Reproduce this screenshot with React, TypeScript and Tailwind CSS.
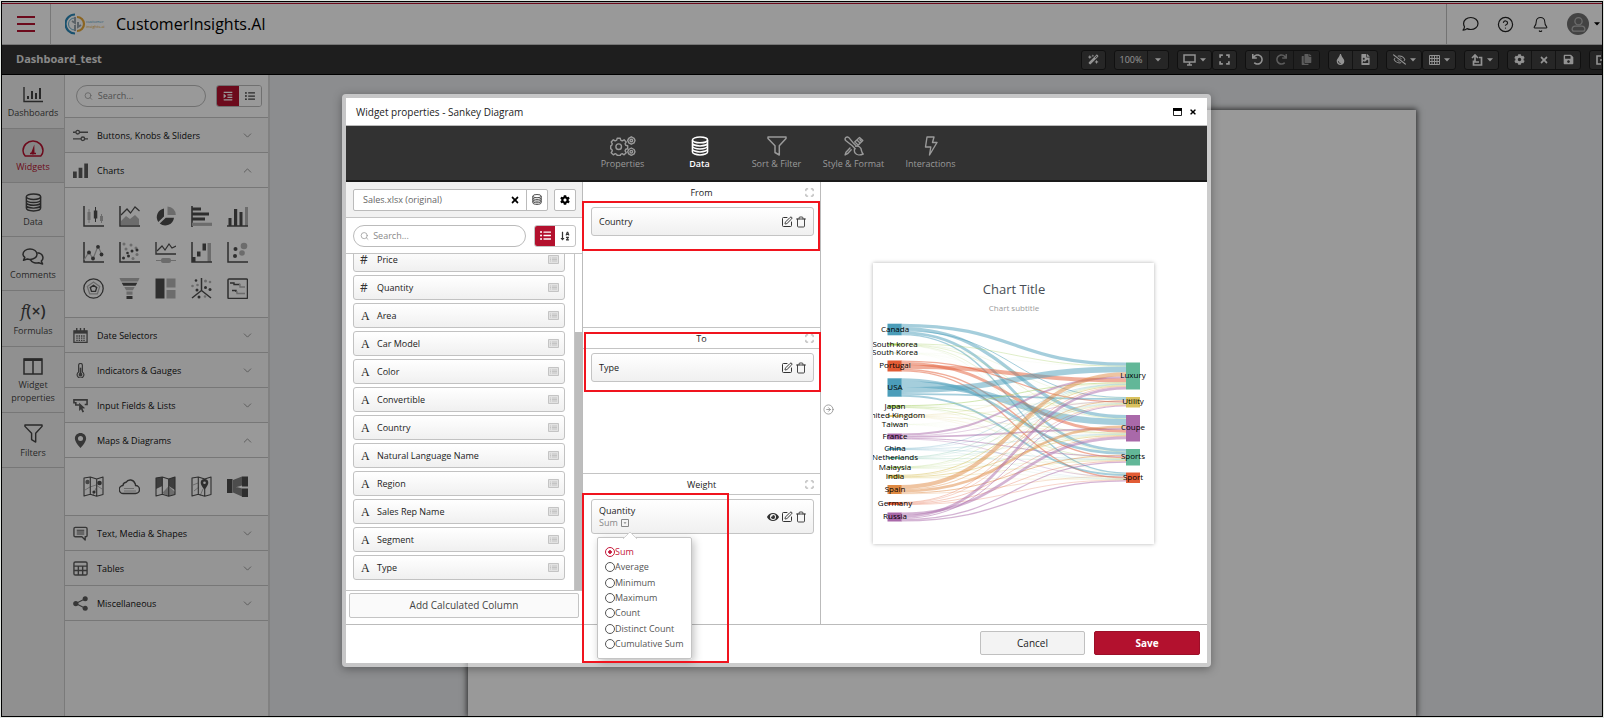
import type { ReactNode } from 'react';
import {
  FaCog,
  FaCopy,
  FaEye,
  FaFileImage,
  FaListUl,
  FaRegEyeSlash,
  FaSave,
  FaSortAlphaDown,
  FaTimes,
  FaTint,
  FaUndo,
  FaRedo,
  FaIndent,
} from 'react-icons/fa';
import { FaWandMagicSparkles } from 'react-icons/fa6';
import { Bell, ChevronDown, ChevronUp, CircleArrowRight, CircleHelp, Search, SquarePen, Trash } from 'lucide-react';

type IconProps = { className?: string };

/* ---------- line icons ---------- */

function DatabaseIcon({ className }: IconProps) {
  return (
    <svg viewBox="0 0 20 22" className={className} fill="none" stroke="currentColor" strokeWidth="1.7">
      <ellipse cx="10" cy="4.2" rx="8.4" ry="3.2" />
      <path d="M1.6 4.2v13.4c0 1.8 3.8 3.3 8.4 3.3s8.4-1.500 8.400-3.300V4.200M1.600 7.700c0 1.800 3.800 3.200 8.400 3.200s8.400-1.400 8.400-3.200M1.600 11c0 1.800 3.800 3.300 8.400 3.300s8.400-1.500 8.400-3.300M1.600 14.300c0 1.800 3.800 3.300 8.400 3.300s8.400-1.500 8.400-3.300" />
    </svg>
  );
}

function FunnelIcon({ className }: IconProps) {
  return (
    <svg viewBox="0 0 20 20" className={className} fill="none" stroke="currentColor" strokeWidth="1.500" strokeLinejoin="round">
      <path d="M1 1h18v1.500L12.300 9.800V19L8 16.500V9.800L1 2.500z" />
    </svg>
  );
}

function GearsIcon({ className }: IconProps) {
  return (
    <svg viewBox="0 0 26 20" className={className} fill="none" stroke="currentColor" strokeWidth="1.400" strokeLinejoin="round">
      <path d="M7.200 2.200h3l.5 2 1.500.7 1.900-1.100 2.100 2.100-1.100 1.900.6 1.500 2 .5v3l-2 .5-.6 1.500 1.100 1.900-2.100 2.100-1.900-1.100-1.500.6-.5 1.200h-3l-.5-1.200-1.500-.6-1.900 1.100-2.100-2.100 1.100-1.900-.6-1.500-1-.5v-3l1-.5.6-1.500-1.100-1.900 2.100-2.100 1.900 1.100 1.500-.7z" />
      <circle cx="8.700" cy="10.700" r="2.800" />
      <path d="M21.300.8l2.800 1.600.9 2-.9 2.400-2.800 1.400-2.600-1.400-1-2.400 1-2zM21.300 12l2.800 1.500.9 2.200-.9 2.200-2.800 1.400-2.600-1.400-1-2.200 1-2.200z" />
      <circle cx="21.300" cy="4.500" r="1.300" />
      <circle cx="21.300" cy="15.700" r="1.300" />
    </svg>
  );
}

function BrushRulerIcon({ className }: IconProps) {
  return (
    <svg viewBox="0 0 20 20" className={className} fill="none" stroke="currentColor" strokeWidth="1.400" strokeLinejoin="round" strokeLinecap="round">
      <path d="M8 9.500L2 4.800C.8 3.800.8 2.400 1.800 1.500s2.500-.6 3.300.4l4.700 5.700M11.800 10.300c2.200-.4 4.200.4 5 2 .8 1.700.6 4.200 2.400 5.700-3 1.400-6.600 1.200-8-.8-.9-1.300-1-3.200-.5-4.900M8 9.500l3.200 3.200M9.800 7.600l2.800 2.700" />
      <path d="M7.200 13.800l-3.700 3.900-2.400 1.200.9-2.700 4-4.200M10.700 6l4.800-4.600 3.300 3.200-5 5M15.300 6.200l-1.600-1.500M13.300 8.200l-1.600-1.500M16.800 4.700l-1-1" />
    </svg>
  );
}

function BoltIcon({ className }: IconProps) {
  return (
    <svg viewBox="0 0 14 20" className={className} fill="none" stroke="currentColor" strokeWidth="1.400" strokeLinejoin="round">
      <path d="M3 1h7L8.500 6.500H13L5.500 19l1.300-8H1.500z" />
    </svg>
  );
}

function BarsRailIcon({ className }: IconProps) {
  return (
    <svg viewBox="0 0 20 16" className={className} fill="none" stroke="currentColor">
      <path d="M1 0v14.500h19" strokeWidth="1.400" />
      <path d="M5 12V9M9 12V4M13 12V6M17 12V1" strokeWidth="2" />
    </svg>
  );
}

function GaugeIcon({ className }: IconProps) {
  return (
    <svg viewBox="0 0 22 17" className={className} fill="none" stroke="currentColor" strokeWidth="1.500" strokeLinejoin="round">
      <path d="M3.200 16C1.800 14.500 1 12.800 1 10.800 1 5.300 5.500 1 11 1s10 4.300 10 9.800c0 2-.8 3.700-2.200 5.200z" />
      <path d="M12.300 4.500l.2 7.700a1.700 1.700 0 1 1-2.800-.6z" fill="currentColor" stroke="none" />
      <path d="M8 13.500h6" />
    </svg>
  );
}

function CommentsIcon({ className }: IconProps) {
  return (
    <svg viewBox="0 0 22 17" className={className} fill="none" stroke="currentColor" strokeWidth="1.500" strokeLinejoin="round">
      <path d="M8 1c4 0 7 2.300 7 5.200s-3 5.200-7 5.200c-1 0-1.900-.1-2.700-.4L1.500 12.200l1.300-2.800C1.700 8.500 1 7.400 1 6.200 1 3.300 4 1 8 1z" />
      <path d="M15.300 4.800c3.300.3 5.700 2.400 5.700 4.900 0 1.300-.7 2.500-1.700 3.300l1.300 3-3.900-1.300c-3.400.8-7-.4-8.300-3" />
    </svg>
  );
}

function ColumnsIcon({ className }: IconProps) {
  return (
    <svg viewBox="0 0 20 17" className={className} fill="none" stroke="currentColor">
      <path d="M1 1h18v15H1zM10 2v14" strokeWidth="1.500" />
      <path d="M1 1.800h18" strokeWidth="2.400" />
    </svg>
  );
}

function CornersIcon({ className, heavy }: IconProps & { heavy?: boolean }) {
  return (
    <svg viewBox="0 0 10 10" className={className} fill="none" stroke="currentColor" strokeWidth={heavy ? 1.6 : 1.1}>
      <path d="M1 3.500V1h2.500M6.500 1H9v2.500M9 6.500V9H6.500M3.500 9H1V6.500" />
    </svg>
  );
}

function MonitorIcon({ className }: IconProps) {
  return (
    <svg viewBox="0 0 13 12" className={className} fill="none" stroke="currentColor" strokeWidth="1.500">
      <path d="M1 1h11v7H1zM6.500 8v3M4 11h5" />
    </svg>
  );
}

function SpeechIcon({ className }: IconProps) {
  return (
    <svg viewBox="0 0 17 16" className={className} fill="none" stroke="currentColor" strokeWidth="1.200" strokeLinejoin="round">
      <path d="M8.800 1.500c4.100 0 7.200 2.600 7.200 6s-3.100 6-7.200 6c-1.400 0-2.700-.3-3.800-.9-.9.900-2.400 1.500-4 1.500.9-1 1.500-2.300 1.500-3.300-.6-1-.9-2.100-.9-3.300 0-3.400 3.100-6 7.200-6z" />
    </svg>
  );
}

function PersonIcon({ className }: IconProps) {
  return (
    <svg viewBox="0 0 16 16" className={className} fill="none" stroke="currentColor" strokeWidth="1.200">
      <circle cx="8" cy="5" r="3.400" />
      <path d="M5 9.500h6c1.700 0 3 1.300 3 3 0 1.200-.6 1.800-1.800 1.800H3.800C2.600 14.300 2 13.700 2 12.500c0-1.700 1.300-3 3-3z" />
    </svg>
  );
}

/* ---------- widget section icons, 16 x 16 ---------- */

const sectionIcons: Record<string, ReactNode> = {
  sliders: (
    <g fill="none" stroke="currentColor" strokeWidth="1.400">
      <path d="M0 4.500h3M7 4.500h9M0 11.500h8.500M12.500 11.500H16" />
      <circle cx="5" cy="4.500" r="1.900" />
      <circle cx="10.500" cy="11.500" r="1.900" />
    </g>
  ),
  bars: <path fill="currentColor" d="M0 9h4v7H0zM6 5h4v11H6zM12 .5h4V16h-4z" />,
  calendar: (
    <g fill="none" stroke="currentColor">
      <path d="M1 3h14v12.300H1z" strokeWidth="1.400" />
      <path d="M1 4.500h14" strokeWidth="3" />
      <path d="M4 0v4M8 0v4M12 0v4" strokeWidth="1.500" />
      <path d="M3.500 8.500h9M3.500 10.800h9M3.500 13.100h9" strokeWidth="1.400" strokeDasharray="1.500 1" />
    </g>
  ),
  thermometer: (
    <g fill="none" stroke="currentColor">
      <path d="M6 2.500a2 2 0 0 1 4 0v7a3.600 3.600 0 1 1-4 0z" strokeWidth="1.300" />
      <path d="M8 5v7" strokeWidth="1.800" />
      <circle cx="8" cy="12.500" r="2" fill="currentColor" stroke="none" />
    </g>
  ),
  input: (
    <g>
      <path d="M6.500 7.500H3V5H1V2h14v5h-2.500" fill="none" stroke="currentColor" strokeWidth="1.700" />
      <path d="M6.500 5l6.500 6-2.900.2 1.700 3.400-1.700.8-1.500-3.500-2.100 1.900z" fill="currentColor" />
    </g>
  ),
  pin: <path fill="currentColor" fillRule="evenodd" d="M8 0c3.400 0 6 2.600 6 5.900C14 10 8 16 8 16S2 10 2 5.900C2 2.600 4.600 0 8 0zm0 3.200a2.700 2.700 0 1 0 0 5.400 2.700 2.700 0 0 0 0-5.400z" />,
  text: (
    <g fill="none" stroke="currentColor" strokeWidth="1.500" strokeLinejoin="round">
      <path d="M2.500 1.500h11c.8 0 1.500.7 1.500 1.500v7c0 .8-.7 1.500-1.500 1.500H13V15l-3.500-3.500h-7C1.700 11.500 1 10.800 1 10V3c0-.8.7-1.500 1.500-1.500z" />
      <path d="M4 4.500h8M4 6.500h8M4 8.500h8" strokeWidth="1.100" />
    </g>
  ),
  table: (
    <g fill="none" stroke="currentColor" strokeWidth="1.500">
      <rect x="1" y="1" width="14" height="14" rx="1.500" />
      <path d="M1 5.500h14M1 10.200h14M5.700 5.500V15M10.300 5.500V15" />
    </g>
  ),
  share: (
    <g fill="currentColor">
      <circle cx="3" cy="8" r="2.800" />
      <circle cx="13" cy="3" r="2.700" />
      <circle cx="13" cy="13" r="2.700" />
      <path d="M3 8l10-5M3 8l10 5" stroke="currentColor" strokeWidth="1.200" />
    </g>
  ),
};

/* ---------- widget tiles, 21 x 21 ---------- */

const DARK = '#4e4e4e';
const LIGHT = '#b4b4b4';

const Axis = () => <path d="M1 0v20h20" fill="none" stroke={DARK} strokeWidth="1.500" />;

const MapBase = () => (
  <path d="M1 2l6.300-1 6.400 2L20 1v17.500l-6.300 1.700-6.400-2L1 20zM7.300 1v17M13.700 3v17" fill="none" stroke={DARK} strokeWidth="1.100" strokeLinejoin="round" />
);

type Tile = { name: string; art: ReactNode };

const chartTiles: Tile[] = [
  {
    name: 'Candlestick chart',
    art: (
      <>
        <Axis />
        <path d="M6 3v14M18.500 8v9" stroke={LIGHT} />
        <path d="M4.500 6h3v8h-3zM17 10h3v5h-3z" fill={LIGHT} />
        <path d="M12.500 1v15" stroke={DARK} />
        <path d="M10.800 4.500h3.500v8h-3.500z" fill={DARK} />
      </>
    ),
  },
  {
    name: 'Area chart',
    art: (
      <>
        <path d="M2 19v-4l5-5 4 3 5-4 4 4v6z" fill={LIGHT} />
        <Axis />
        <path d="M2 9l6-6 3.500 4L16 1l4.500 4" fill="none" stroke={DARK} strokeWidth="1.200" />
      </>
    ),
  },
  {
    name: 'Pie chart',
    art: (
      <>
        <path d="M12.500 9V.5a8.500 8.500 0 0 1 8.300 8.500z" fill={LIGHT} />
        <path d="M9 2.500v8L3.300 16A8.700 8.700 0 0 1 9 2.500zM10.700 11.700h8.300A8.800 8.800 0 0 1 4.700 17.500z" fill={DARK} />
      </>
    ),
  },
  {
    name: 'Bar chart',
    art: (
      <>
        <path d="M1 0v21" stroke={DARK} strokeWidth="1.600" />
        <path d="M1 3h9M1 8h17M1 13h13" stroke={DARK} strokeWidth="3.200" />
        <path d="M1 18.300h20" stroke={LIGHT} strokeWidth="3.200" />
      </>
    ),
  },
  {
    name: 'Column chart',
    art: (
      <>
        <path d="M18 1h3v19h-3z" fill={LIGHT} />
        <path d="M0 20h21" stroke={DARK} strokeWidth="1.500" />
        <path d="M1.500 12h3v8h-3zM7 3h3.200v17H7zM12.500 6h3v14h-3z" fill={DARK} />
      </>
    ),
  },
  {
    name: 'Line chart',
    art: (
      <>
        <Axis />
        <path d="M1 18l5-8 4 7 5-13 4 9" fill="none" stroke={LIGHT} strokeWidth="1.200" />
        <g fill={DARK}>
          <circle cx="6" cy="10.500" r="1.900" />
          <circle cx="10" cy="16.500" r="1.900" />
          <circle cx="15" cy="4.800" r="1.900" />
          <circle cx="18.500" cy="12.500" r="1.900" />
        </g>
      </>
    ),
  },
  {
    name: 'Scatter plot',
    art: (
      <>
        <Axis />
        <g fill={LIGHT}>
          <circle cx="5" cy="2" r="1.500" />
          <circle cx="12" cy="3" r="1.500" />
          <circle cx="7" cy="7" r="1.500" />
          <circle cx="17" cy="6" r="1.500" />
          <circle cx="18" cy="12.500" r="1.500" />
          <circle cx="14" cy="16.500" r="1.500" />
        </g>
        <g fill={DARK}>
          <circle cx="4.500" cy="16" r="1.500" />
          <circle cx="9.500" cy="14" r="1.500" />
          <circle cx="8.500" cy="11" r="1.300" />
          <circle cx="13" cy="9" r="1.500" />
          <circle cx="18" cy="8" r="1.500" />
        </g>
      </>
    ),
  },
  {
    name: 'Time series',
    art: (
      <>
        <path d="M1 0v12h20" fill="none" stroke={DARK} strokeWidth="1.400" />
        <path d="M2 9l5-5 3 4 4-6 3 4 4-2" fill="none" stroke={DARK} strokeWidth="1.200" />
        <path d="M1 18.500h20" stroke={LIGHT} />
        <rect x="6" y="16" width="10" height="5" rx="2" fill={LIGHT} />
      </>
    ),
  },
  {
    name: 'Waterfall chart',
    art: (
      <>
        <path d="M16.500 1H20v19h-3.500z" fill={LIGHT} />
        <Axis />
        <path d="M1 15h3.500v5H1zM6 9.500h3.500v5H6zM11.500 1.500H15v7h-3.500z" fill={DARK} />
      </>
    ),
  },
  {
    name: 'Bubble chart',
    art: (
      <>
        <Axis />
        <circle cx="17" cy="4" r="3.300" fill={LIGHT} />
        <circle cx="15" cy="11" r="2.800" fill={LIGHT} />
        <circle cx="8.500" cy="7" r="2" fill={DARK} />
        <circle cx="8" cy="14" r="2" fill={DARK} />
      </>
    ),
  },
  {
    name: 'Radar chart',
    art: (
      <g fill="none">
        <circle cx="10.500" cy="10.500" r="9.700" stroke={DARK} strokeWidth="1.300" />
        <path d="M10.500 4l6.200 4.600-2.300 7.200H6.700L4.300 8.600z" stroke={LIGHT} strokeWidth="1.300" />
        <path d="M10.500 7.300l3.200 2.300-1.200 3.800h-4L7.300 9.600z" stroke={DARK} strokeWidth="1.400" />
      </g>
    ),
  },
  {
    name: 'Funnel chart',
    art: (
      <>
        <path d="M.5 0h20L19 3.500H2zM5.300 9h10.400l-1.800 3.200H7.100zM7.500 13.500h6v3.200h-6z" fill={LIGHT} />
        <path d="M2.700 4.800h15.600l-1.700 3H4.400zM7.500 18h6v3h-6z" fill={DARK} />
      </>
    ),
  },
  {
    name: 'Tree map',
    art: (
      <>
        <path d="M.5.500h9v20h-9z" fill={DARK} />
        <path d="M11.500.500h9v9h-9zM11.500 12h9v8.500h-9z" fill={LIGHT} />
      </>
    ),
  },
  {
    name: 'Scatter plot 3D',
    art: (
      <>
        <path d="M10.500 0v12.500L1 20M10.500 12.500L20 20" fill="none" stroke={DARK} strokeWidth="1.500" />
        <g fill={DARK}>
          <circle cx="5" cy="2.500" r="1.300" />
          <circle cx="6" cy="12" r="1.500" />
          <circle cx="14.500" cy="9.500" r="1.500" />
          <circle cx="19" cy="11.500" r="1.500" />
          <circle cx="8" cy="19" r="1.500" />
        </g>
        <g fill={LIGHT}>
          <circle cx="1.500" cy="8" r="1.300" />
          <circle cx="14.500" cy="3" r="1.500" />
          <circle cx="19" cy="4" r="1.300" />
          <circle cx="6.500" cy="7" r="1.300" />
          <circle cx="14" cy="18.500" r="1.300" />
        </g>
      </>
    ),
  },
  {
    name: 'Gantt chart',
    art: (
      <g fill="none" strokeWidth="1.400">
        <rect x="1" y="1" width="19.500" height="19.500" rx="1" stroke={DARK} strokeWidth="1.500" />
        <path d="M3 5h4v1.500h6M5 12.500h4V14" stroke={DARK} />
        <path d="M12 6.500h1V9h5M9 14h1v1.500h8" stroke={LIGHT} />
      </g>
    ),
  },
];

const mapTiles: Tile[] = [
  {
    name: 'Bubble map',
    art: (
      <>
        <path d="M2 14l5-3 6-2 6 4M10 20l3-8" fill="none" stroke={LIGHT} />
        <MapBase />
        <circle cx="4.500" cy="6" r="2.200" fill="#777" />
        <circle cx="16.500" cy="7" r="2.300" fill={DARK} />
        <circle cx="11" cy="16" r="1.600" fill={DARK} />
      </>
    ),
  },
  {
    name: 'Cloud map',
    art: (
      <g fill="none" strokeLinejoin="round">
        <path d="M4.500 17.500a4 4 0 0 1-.5-8 3.500 3.500 0 0 1 3-3.200A5 5 0 0 1 16 7.500a2.500 2.500 0 0 1 .5 2 4 4 0 0 1 0 8z" stroke={DARK} strokeWidth="1.400" />
        <path d="M5 12.500h10M5 15h12" stroke={LIGHT} />
      </g>
    ),
  },
  {
    name: 'Region map',
    art: (
      <>
        <path d="M1 2l6.300-1v9L1 13zM13.700 3L20 1v13l-6.300-4z" fill="#666" />
        <path d="M7.300 17l6.400-7 6.300 6v2.500l-6.300 1.700z" fill={LIGHT} />
        <MapBase />
      </>
    ),
  },
  {
    name: 'Pin map',
    art: (
      <>
        <path d="M2 9l5-2M9 20l3-7M3 15l5-4" fill="none" stroke={LIGHT} />
        <MapBase />
        <path d="M13.500 3a3.800 3.800 0 0 1 3.800 3.700c0 2.500-3.800 7-3.800 7s-3.800-4.500-3.800-7A3.800 3.800 0 0 1 13.500 3z" fill={DARK} />
        <circle cx="13.500" cy="6.700" r="1.300" fill="#fff" />
      </>
    ),
  },
  {
    name: 'Sankey diagram',
    art: (
      <>
        <path d="M6 4l9-3.500v9L6 12zM6 10l9 2.500v8L6 16.500z" fill="#808080" />
        <path d="M0 3h5.500v14H0zM15 .500h6v10h-6zM15 12.500h6v8.500h-6z" fill={DARK} />
      </>
    ),
  },
];

/* ---------- data ---------- */

type Section = { label: string; icon: string; tiles?: Tile[] };

const sections: Section[] = [
  { label: 'Buttons, Knobs & Sliders', icon: 'sliders' },
  { label: 'Charts', icon: 'bars', tiles: chartTiles },
  { label: 'Date Selectors', icon: 'calendar' },
  { label: 'Indicators & Gauges', icon: 'thermometer' },
  { label: 'Input Fields & Lists', icon: 'input' },
  { label: 'Maps & Diagrams', icon: 'pin', tiles: mapTiles },
  { label: 'Text, Media & Shapes', icon: 'text' },
  { label: 'Tables', icon: 'table' },
  { label: 'Miscellaneous', icon: 'share' },
];

const columns: { kind: '#' | 'A'; name: string }[] = [
  { kind: '#', name: 'Price' },
  { kind: '#', name: 'Quantity' },
  { kind: 'A', name: 'Area' },
  { kind: 'A', name: 'Car Model' },
  { kind: 'A', name: 'Color' },
  { kind: 'A', name: 'Convertible' },
  { kind: 'A', name: 'Country' },
  { kind: 'A', name: 'Natural Language Name' },
  { kind: 'A', name: 'Region' },
  { kind: 'A', name: 'Sales Rep Name' },
  { kind: 'A', name: 'Segment' },
  { kind: 'A', name: 'Type' },
];

const aggregations = ['Sum', 'Average', 'Minimum', 'Maximum', 'Count', 'Distinct Count', 'Cumulative Sum'];

/* ---------- sankey ---------- */

// flows: weight towards each target; order: how the flows stack at the source, top to bottom;
// rank: how the source stacks at a target
type Source = { name: string; mid: number; color: string; flows: number[]; order?: number[]; rank: number };

const TEAL = '#4b9db9';
const GREEN = '#a6cf63';
const RED = '#e25c35';
const YELLOW = '#d9c25f';
const PURPLE = '#a969a9';
const MINT = '#62b798';
const ORANGE = '#df8a43';

const sources: Source[] = [
  { name: 'Canada', mid: 66.5, color: TEAL, flows: [3.3, 1, 3.3, 2.7, 1.3], order: [0, 2, 1, 3, 4], rank: 0 },
  { name: 'South korea', mid: 81.5, color: GREEN, flows: [0.7, 0.3, 0.5, 0.4, 0.2], rank: 1 },
  { name: 'South Korea', mid: 90, color: GREEN, flows: [0.1, 0.05, 0.1, 0.05, 0.05], rank: 2 },
  { name: 'Portugal', mid: 103, color: RED, flows: [4, 1.3, 3, 1.4, 1.3], order: [1, 2, 0, 3, 4], rank: 6 },
  { name: 'USA', mid: 124.5, color: TEAL, flows: [5.7, 1.7, 6.4, 2.6, 2], order: [3, 2, 0, 1, 4], rank: 3 },
  { name: 'Japan', mid: 143.5, color: GREEN, flows: [1, 0.3, 0.7, 0.6, 0.2], rank: 7 },
  { name: 'United Kingdom', mid: 153, color: YELLOW, flows: [0.4, 0.3, 0.4, 0.3, 0.2], rank: 8 },
  { name: 'Taiwan', mid: 161.5, color: GREEN, flows: [0.1, 0.05, 0.1, 0.05, 0.05], rank: 9 },
  { name: 'France', mid: 173.5, color: PURPLE, flows: [2, 0.6, 1.7, 1, 0.6], rank: 5 },
  { name: 'China', mid: 186, color: TEAL, flows: [0.5, 0.3, 0.4, 0.4, 0.2], rank: 10 },
  { name: 'Netherlands', mid: 195, color: MINT, flows: [0.5, 0.3, 0.3, 0.4, 0.2], rank: 11 },
  { name: 'Malaysia', mid: 204.5, color: GREEN, flows: [0.5, 0.3, 0.4, 0.3, 0.2], rank: 12 },
  { name: 'India', mid: 213.5, color: YELLOW, flows: [1, 0.6, 1, 0.6, 0.3], rank: 13 },
  { name: 'Spain', mid: 226.5, color: ORANGE, flows: [4, 0.8, 2.7, 1, 0.5], rank: 4 },
  { name: 'Germany', mid: 240.5, color: RED, flows: [0.6, 0.5, 0.6, 0.6, 0.5], rank: 14 },
  { name: 'Russia', mid: 254, color: PURPLE, flows: [2.7, 1, 2.7, 1.3, 1.3], order: [2, 0, 1, 3, 4], rank: 15 },
];

const targets = [
  { name: 'Luxury', top: 99.5, height: 27, color: MINT },
  { name: 'Utility', top: 134, height: 10.5, color: YELLOW },
  { name: 'Coupe', top: 152, height: 26.5, color: PURPLE },
  { name: 'Sports', top: 186, height: 16.5, color: MINT },
  { name: 'Sport', top: 209.5, height: 10.5, color: RED },
];

const total = (flows: number[]) => flows.reduce((a, b) => a + b, 0);

function buildLinks() {
  const links: { d: string; width: number; color: string }[] = [];
  for (const s of sources) {
    let y = s.mid - total(s.flows) / 2;
    for (const i of s.order ?? [0, 1, 2, 3, 4]) {
      const width = s.flows[i];
      const above = total(sources.filter((o) => o.rank < s.rank).map((o) => o.flows[i]));
      const y0 = y + width / 2;
      const y1 = targets[i].top + above + width / 2;
      links.push({ d: `M28 ${y0}C141 ${y0} 141 ${y1} 253 ${y1}`, width, color: s.color });
      y += width;
    }
  }
  return links;
}

function SankeyChart() {
  return (
    <svg viewBox="0 0 281 281" className="block w-full font-['Open_Sans',sans-serif]" role="img" aria-label="Sankey diagram of country to car type">
      <text x="141" y="31" textAnchor="middle" fontSize="13" fill="#464c54">Chart Title</text>
      <text x="141" y="48" textAnchor="middle" fontSize="8" fill="#9a9a9a">Chart subtitle</text>
      <g fill="none" strokeOpacity="0.5">
        {buildLinks().map((l, i) => (
          <path key={i} d={l.d} stroke={l.color} strokeWidth={l.width} />
        ))}
      </g>
      {sources.map((s) => (
        <rect key={s.name} x="14.500" y={s.mid - total(s.flows) / 2} width="14" height={total(s.flows)} fill={s.color} />
      ))}
      {targets.map((t) => (
        <rect key={t.name} x="253" y={t.top} width="14" height={t.height} fill={t.color} />
      ))}
      <g fontSize="8" fill="#000" textAnchor="middle">
        {sources.map((s) => (
          <text key={s.name} x="22" y={Math.round(s.mid + 2)}>{s.name}</text>
        ))}
        {targets.map((t) => (
          <text key={t.name} x="260" y={Math.round(t.top + t.height / 2 + 2)}>{t.name}</text>
        ))}
      </g>
    </svg>
  );
}

/* ---------- page behind the dialog ---------- */

function Caret({ className }: IconProps) {
  return (
    <svg viewBox="0 0 6 4" className={`h-[4px] w-[6px] ${className ?? ''}`} fill="currentColor">
      <path d="M0 .300h6L3 3.500z" />
    </svg>
  );
}

function Header() {
  return (
    <header className="flex h-[41px] shrink-0 items-stretch border-b border-[#c4c4c4] bg-white">
      <button aria-label="Menu" className="flex w-[49px] flex-col items-center justify-center gap-[5px] border-r border-[#c8c8c8]">
        <span className="h-[2px] w-[18px] bg-[#b5122f]" />
        <span className="h-[2px] w-[18px] bg-[#b5122f]" />
        <span className="h-[2px] w-[18px] bg-[#b5122f]" />
      </button>
      <div className="flex items-center pl-[14px]">
        <svg viewBox="0 0 46 22" className="mr-[5px] h-[22px] w-[46px]" fill="none" aria-hidden="true">
          <path d="M10 1.500a9.500 9.500 0 0 0 0 19" stroke="#2b87b8" strokeWidth="2.200" />
          <path d="M12 4a7 7 0 0 1 0 14" stroke="#e8a83a" strokeWidth="2.200" />
          <path d="M9.500 5a6 6 0 0 0 0 12" stroke="#6aaed0" strokeWidth="1" />
          <path d="M7 8l3 2V4M10 12v6M13 9v5l3-2" stroke="#9aa4ac" strokeWidth="2" />
          <text x="21" y="10" fontSize="4" fill="#4a9cc8">customer</text>
          <text x="21" y="15" fontSize="4" fill="#e8a83a">insights.ai</text>
        </svg>
        <span className="text-[16px] text-black">CustomerInsights.AI</span>
      </div>
      <div className="ml-auto flex items-center gap-[18px] border-l border-[#c0c0c0] pr-[2px] pl-[15px] text-[#222]">
        <button aria-label="Messages"><SpeechIcon className="h-[16px] w-[17px]" /></button>
        <button aria-label="Help"><CircleHelp className="size-[17px]" strokeWidth={1.700} /></button>
        <button aria-label="Notifications"><Bell className="size-[17px]" strokeWidth={1.500} /></button>
        <button aria-label="Account" className="flex items-center gap-[5px]">
          <span className="flex size-[22px] items-center justify-center rounded-full bg-[#707070] text-[#b4b4b4]">
            <PersonIcon className="size-[17px]" />
          </span>
          <Caret className="text-black" />
        </button>
      </div>
    </header>
  );
}

function ToolGroup({ items }: { items: { name: string; content: ReactNode; width: string; off?: boolean }[] }) {
  return (
    <div className="flex h-[20px] shrink-0 divide-x divide-[#222] overflow-hidden rounded-[3px] border border-[#1c1c1c] bg-[#404040]">
      {items.map((it) => (
        <button key={it.name} aria-label={it.name} className={`flex items-center justify-center gap-[4px] text-[9px] ${it.width} ${it.off ? 'bg-[#363636] text-[#999]' : 'text-[#f4f4f4]'}`}>
          {it.content}
        </button>
      ))}
    </div>
  );
}

function Toolbar() {
  return (
    <div className="flex h-[30px] shrink-0 items-center overflow-hidden border-b border-black bg-[#323232] pl-[14px]">
      <h1 className="text-[11px] font-bold text-[#e4e4e4]">Dashboard_test</h1>
      <div className="-mr-[13px] ml-auto flex shrink-0 gap-[8px]">
        <ToolGroup items={[{ name: 'Design', width: 'w-[23px]', content: <FaWandMagicSparkles className="size-[11px]" /> }]} />
        <ToolGroup
          items={[
            { name: 'Zoom level', width: 'w-[33px]', content: '100%' },
            { name: 'Zoom options', width: 'w-[20px]', content: <Caret /> },
          ]}
        />
        <div className="flex">
          <ToolGroup items={[{ name: 'Device', width: 'w-[33px]', content: <><MonitorIcon className="h-[12px] w-[13px]" /><Caret /></> }]} />
          <ToolGroup items={[{ name: 'Fullscreen', width: 'w-[23px]', content: <CornersIcon className="size-[11px]" heavy /> }]} />
        </div>
        <ToolGroup
          items={[
            { name: 'Undo', width: 'w-[24px]', content: <FaUndo className="size-[11px]" /> },
            { name: 'Redo', width: 'w-[24px]', off: true, content: <FaRedo className="size-[11px]" /> },
            { name: 'Copy', width: 'w-[25px]', off: true, content: <FaCopy className="size-[11px]" /> },
          ]}
        />
        <ToolGroup
          items={[
            { name: 'Theme', width: 'w-[24px]', content: <FaTint className="size-[11px]" /> },
            { name: 'Background', width: 'w-[24px]', content: <FaFileImage className="size-[11px]" /> },
          ]}
        />
        <div className="flex">
          <ToolGroup items={[{ name: 'Visibility', width: 'w-[34px]', content: <><FaRegEyeSlash className="size-[13px]" /><Caret /></> }]} />
          <ToolGroup
            items={[
              {
                name: 'Grid',
                width: 'w-[32px]',
                content: (
                  <>
                    <svg viewBox="0 0 11 10" className="h-[10px] w-[11px]" fill="none" stroke="currentColor">
                      <path d="M.5.500h10v9H.5zM.5 3.500h10M.5 6.500h10M3 .500v9M5.500.500v9M8 .500v9" />
                    </svg>
                    <Caret />
                  </>
                ),
              },
            ]}
          />
        </div>
        <ToolGroup
          items={[
            {
              name: 'Share',
              width: 'w-[33px]',
              content: (
                <>
                  <svg viewBox="0 0 12 12" className="size-[12px]" fill="none" stroke="currentColor" strokeWidth="1.700">
                    <path d="M8 3.500h2.500v7.500h-8V6.500M1 4l3-3 3 3M4 2v6h4" />
                  </svg>
                  <Caret />
                </>
              ),
            },
          ]}
        />
        <ToolGroup
          items={[
            { name: 'Settings', width: 'w-[24px]', content: <FaCog className="size-[11px]" /> },
            { name: 'Discard', width: 'w-[24px]', content: <FaTimes className="size-[10px]" /> },
            { name: 'Save dashboard', width: 'w-[24px]', content: <FaSave className="size-[11px]" /> },
          ]}
        />
        <ToolGroup
          items={[
            {
              name: 'Exit',
              width: 'w-[24px]',
              content: (
                <svg viewBox="0 0 12 10" className="h-[10px] w-[12px]" fill="none" stroke="currentColor" strokeWidth="1.600">
                  <path d="M5 1H1v8h4M4 5h7M8 2l3 3-3 3" />
                </svg>
              ),
            },
          ]}
        />
      </div>
    </div>
  );
}

const railItems: { label: string; icon: ReactNode; height: string; active?: boolean }[] = [
  { label: 'Dashboards', icon: <BarsRailIcon className="h-[16px] w-[20px]" />, height: 'h-[54px]' },
  { label: 'Widgets', icon: <GaugeIcon className="h-[17px] w-[22px]" />, height: 'h-[54px]', active: true },
  { label: 'Data', icon: <DatabaseIcon className="h-[19px] w-[17px]" />, height: 'h-[54px]' },
  { label: 'Comments', icon: <CommentsIcon className="h-[17px] w-[22px]" />, height: 'h-[54px]' },
  {
    label: 'Formulas',
    icon: (
      <span className="text-[16px] leading-[18px] font-semibold" aria-hidden="true">
        <span className="font-['DejaVu_Serif',serif] font-normal italic">f</span>(×)
      </span>
    ),
    height: 'h-[56px]',
  },
  { label: 'Widget properties', icon: <ColumnsIcon className="h-[17px] w-[20px]" />, height: 'h-[66px]' },
  { label: 'Filters', icon: <FunnelIcon className="size-[19px]" />, height: 'h-[55px]' },
];

function Rail() {
  return (
    <nav className="w-[63px] shrink-0 border-r border-[#ccc] bg-[#f1f1f1]">
      {railItems.map((it) => (
        <a
          key={it.label}
          href="#"
          className={`flex flex-col items-center justify-center gap-[3px] border-b border-[#c6c6c6] pt-[2px] text-center text-[9px] leading-[13px] ${it.height} ${it.active ? 'bg-[#e0e0e0] text-[#b5122f]' : 'text-[#444]'}`}
        >
          {it.icon}
          <span className="w-[52px]">{it.label}</span>
        </a>
      ))}
    </nav>
  );
}

function WidgetPanel() {
  return (
    <aside className="w-[205px] shrink-0 border-r-2 border-[#d8d8d8] bg-[#f9f9f9]">
      <div className="flex h-[43px] items-center justify-between border-b border-[#c6c6c6] bg-white pr-[6px] pl-[11px]">
        <label className="flex h-[22px] w-[130px] items-center gap-[5px] rounded-full border border-[#bbb] px-[7px] text-[#999]">
          <Search className="size-[10px]" strokeWidth={2} />
          <input type="search" placeholder="Search..." aria-label="Search widgets" className="w-full min-w-0 bg-transparent text-[9px] outline-none placeholder:text-[#888]" />
        </label>
        <div className="flex h-[22px] overflow-hidden rounded-[3px] border border-[#bbb]">
          <button aria-label="Grouped view" className="flex w-[22px] items-center justify-center bg-[#b5122f] text-white"><FaIndent className="size-[10px]" /></button>
          <button aria-label="List view" className="flex w-[22px] items-center justify-center bg-white text-[#444]"><FaListUl className="size-[10px]" /></button>
        </div>
      </div>
      {sections.map((s) => (
        <section key={s.label} className="border-b border-[#c6c6c6]">
          <button className={`flex h-[34px] w-full items-center gap-[9px] pt-px pr-[14px] pl-[8px] text-[9px] text-[#111] ${s.tiles ? 'bg-white' : ''}`}>
            <svg viewBox="0 0 16 16" className="size-[15px] text-[#5c5c5c]">{sectionIcons[s.icon]}</svg>
            <span className="flex-1 text-left">{s.label}</span>
            {s.tiles ? <ChevronUp className="size-[13px] text-[#999]" strokeWidth={1.800} /> : <ChevronDown className="size-[13px] text-[#999]" strokeWidth={1.800} />}
          </button>
          {s.tiles && (
            <div className="grid grid-cols-[repeat(5,21px)] gap-[15px] border-t border-[#c6c6c6] bg-white py-[18px] pl-[18px]">
              {s.tiles.map((t) => (
                <button key={t.name} aria-label={t.name} className="size-[21px]">
                  <svg viewBox="0 0 21 21" className="size-[21px]">{t.art}</svg>
                </button>
              ))}
            </div>
          )}
        </section>
      ))}
    </aside>
  );
}

/* ---------- dialog ---------- */

const tabs: { label: string; icon: ReactNode }[] = [
  { label: 'Properties', icon: <GearsIcon className="h-[20px] w-[26px]" /> },
  { label: 'Data', icon: <DatabaseIcon className="h-[20px] w-[18px]" /> },
  { label: 'Sort & Filter', icon: <FunnelIcon className="size-[20px]" /> },
  { label: 'Style & Format', icon: <BrushRulerIcon className="size-[20px]" /> },
  { label: 'Interactions', icon: <BoltIcon className="h-[20px] w-[14px]" /> },
];

function ColumnsPane() {
  return (
    <div className="flex w-[237px] shrink-0 flex-col border-r border-[#bbb]">
      <div className="flex h-[36px] shrink-0 items-center gap-[6px] border-b border-[#c4c4c4] bg-[#f1f1f1] pr-[6px] pl-[7px]">
        <div className="flex h-[22px] flex-1 items-stretch rounded-[2px] border border-[#bbb] bg-white">
          <span className="flex flex-1 items-center pl-[9px] text-[9px] text-[#666]">Sales.xlsx (original)</span>
          <button aria-label="Clear source" className="px-[6px] text-black"><FaTimes className="size-[10px]" /></button>
          <button aria-label="Choose source" className="flex w-[21px] items-center justify-center border-l border-[#bbb] text-[#333]"><DatabaseIcon className="h-[11px] w-[10px]" /></button>
        </div>
        <button aria-label="Source settings" className="flex h-[22px] w-[22px] items-center justify-center rounded-[2px] border border-[#bbb] bg-white text-black"><FaCog className="size-[10px]" /></button>
      </div>
      <div className="flex h-[36px] shrink-0 items-center gap-[8px] border-b border-[#c4c4c4] pr-[6px] pl-[7px]">
        <label className="flex h-[22px] flex-1 items-center gap-[4px] rounded-full border border-[#bbb] px-[6px] text-[#999]">
          <Search className="size-[10px]" strokeWidth={2} />
          <input type="search" placeholder="Search..." aria-label="Search columns" className="w-full min-w-0 bg-transparent text-[9px] outline-none placeholder:text-[#8a8a8a]" />
        </label>
        <div className="flex h-[22px] overflow-hidden rounded-[3px] border border-[#c4c4c4]">
          <button aria-label="Grouped" className="flex w-[20px] items-center justify-center bg-[#b3112e] text-white"><FaListUl className="size-[11px]" /></button>
          <button aria-label="Sort by name" className="flex w-[20px] items-center justify-center text-[#333]"><FaSortAlphaDown className="size-[10px]" /></button>
        </div>
      </div>
      <div className="flex h-[337px] shrink-0 overflow-hidden border-b border-[#c4c4c4]">
        <ul className="-mt-[7px] flex flex-1 flex-col gap-[3px] pr-[9px] pl-[7px]">
          {columns.map((c) => (
            <li key={c.name} className="flex h-[25px] shrink-0 items-center rounded-[3px] border border-[#c2c2c2] bg-linear-to-b from-white to-[#f0f0f0] px-[5px] text-[9px] font-medium text-[#222]">
              {c.kind === '#' ? (
                <span className="w-[18px] pl-px text-[12px] leading-none text-[#333]">#</span>
              ) : (
                <span className="w-[18px] pl-[2px] font-['Liberation_Serif',serif] text-[12px] leading-none text-[#222]">A</span>
              )}
              <span className="flex-1">{c.name}</span>
              <svg viewBox="0 0 11 9" className="h-[9px] w-[11px]" fill="#e2e2e2" stroke="#c4c4c4">
                <path d="M.5.500h10v8H.5zM2 3h1M4 3h5M2 4.500h1M4 4.500h5M2 6h1M4 6h5" />
              </svg>
            </li>
          ))}
        </ul>
        <div className="flex w-[8px] flex-col justify-end border-l border-[#c4c4c4] bg-white">
          <div className="h-[258px] bg-[#bdbdbd]" />
        </div>
      </div>
      <div className="px-[3px] pt-[2px] pb-[6px]">
        <button className="block h-[25px] w-full rounded-[2px] border border-[#c4c4c4] bg-[#fafafa] text-[10px] text-[#444]">Add Calculated Column</button>
      </div>
    </div>
  );
}

function Slot({ title, field, className, children, preview, frame }: { title: string; field: ReactNode; className: string; children?: ReactNode; preview?: boolean; frame: string }) {
  return (
    <section className={`relative ${className}`}>
      <div className="flex h-[21px] items-center border-b border-[#c4c4c4] pt-px pr-[6px] pl-[15px]">
        <h3 className="flex-1 text-center text-[9px] font-medium text-[#222]">{title}</h3>
        <button aria-label={`Expand ${title}`} className="text-[#aaa]"><CornersIcon className="size-[9px]" /></button>
      </div>
      <div className="pt-[4px] pr-[6px] pl-[8px]">
        <div className="flex items-center rounded-[3px] border border-[#c4c4c4] bg-linear-to-b from-white to-[#f0f0f0] pr-[6px] pl-[7px] text-[#333]">
          <div className="flex-1 text-[9px] font-medium text-[#222]">{field}</div>
          <div className="flex gap-[2px]">
            {preview && <button aria-label="Preview"><FaEye className="size-[12px]" /></button>}
            <button aria-label="Edit"><SquarePen className="size-[12px]" strokeWidth={2} /></button>
            <button aria-label="Remove"><Trash className="size-[12px]" strokeWidth={1.800} /></button>
          </div>
        </div>
      </div>
      {children}
      <div className={`pointer-events-none absolute border-2 border-[#f0141e] ${frame}`} />
    </section>
  );
}

function AggregationMenu() {
  return (
    <fieldset className="absolute top-[63px] left-[14px] flex h-[122px] w-[95px] flex-col justify-between rounded-[2px] border border-[#c4c4c4] bg-white px-[7px] py-[7px] shadow-[2px_3px_8px_rgba(0,0,0,0.25)]">
      <svg viewBox="0 0 14 8" className="absolute -top-[7px] left-[25px] h-[8px] w-[14px]" aria-hidden="true">
        <path d="M0 8l7-7 7 7" fill="#fff" stroke="#d4d4d4" />
      </svg>
      {aggregations.map((a, i) => (
        <label key={a} className="flex items-center text-[9px] leading-[14px] whitespace-nowrap text-[#555] has-checked:text-[#c4183c]">
          <input
            type="radio"
            name="aggregation"
            defaultChecked={i === 0}
            className="size-[10px] shrink-0 appearance-none rounded-full border border-[#555] checked:border-[#c4183c] checked:bg-[radial-gradient(circle,#c4183c_1.5px,transparent_2px)]"
          />
          {a}
        </label>
      ))}
    </fieldset>
  );
}

function Dialog() {
  return (
    <div role="dialog" aria-label="Widget properties" className="w-[869px] rounded-[4px] border-4 border-white/50 bg-clip-padding shadow-[0_2px_10px_rgba(0,0,0,0.35)]">
      <div className="bg-white">
        <div className="flex h-[28px] items-center gap-[7px] border-b border-[#bbb] pt-px pr-[10px] pl-[10px]">
          <h2 className="flex-1 text-[10px] text-[#1c1c1c]">Widget properties - Sankey Diagram</h2>
          <button aria-label="Maximize">
            <svg viewBox="0 0 9 8" className="h-[8px] w-[9px]"><path d="M.5.500h8v7h-8z" fill="#fff" stroke="#222" /><path d="M0 0h9v3H0z" fill="#000" /></svg>
          </button>
          <button aria-label="Close" className="text-black"><FaTimes className="size-[8px]" /></button>
        </div>
        <nav className="flex h-[56px] justify-center border-b-2 border-[#1a1a1a] bg-[#323232]">
          {tabs.map((t) => (
            <button key={t.label} className={`flex w-[77px] flex-col items-center justify-center gap-[1px] text-[9px] leading-[13px] whitespace-nowrap ${t.label === 'Data' ? 'font-semibold text-white' : 'text-[#9a9a9a]'}`}>
              {t.icon}
              {t.label}
            </button>
          ))}
        </nav>
        <div className="flex items-stretch">
          <ColumnsPane />
          <div className="flex w-[238px] shrink-0 flex-col border-r border-[#bbb]">
            <Slot title="From" className="h-[145px]" field={<div className="leading-[27px]">Country</div>} frame="top-[19px] right-0 -left-px h-[50px]" />
            <Slot title="To" className="h-[146px] border-t border-[#c4c4c4]" field={<div className="leading-[27px]">Type</div>} frame="top-[4px] -right-px left-px h-[60px]" />
            <Slot
              title="Weight"
              className="flex-1 border-t border-[#c4c4c4]"
              preview
              field={
                <div className="pt-[5px] pb-[4px] leading-[12px]">
                  Quantity
                  <button className="flex items-center gap-[3px] font-normal text-[#888]">
                    Sum
                    <svg viewBox="0 0 8 8" className="size-[8px]" fill="none" stroke="#888"><path d="M.5.500h7v7h-7z" /><path d="M2.500 3.200h3L4 5z" fill="#888" stroke="none" /></svg>
                  </button>
                </div>
              }
              frame="top-[19px] -left-px h-[170px] w-[147px]"
            >
              <AggregationMenu />
            </Slot>
          </div>
          <div className="flex flex-1 items-center pl-[2px]">
            <button aria-label="Collapse preview" className="mt-[12px] text-[#888]"><CircleArrowRight className="size-[11px]" strokeWidth={1.700} /></button>
            <div className="mr-[14px] flex flex-1 justify-center">
              <div className="w-[281px] overflow-hidden bg-white shadow-[0_0_4px_rgba(0,0,0,0.3)]">
                <SankeyChart />
              </div>
            </div>
          </div>
        </div>
        <div className="flex h-[39px] items-center justify-end gap-[9px] border-t border-[#bbb] pr-[7px] pb-[2px]">
          <button className="h-[24px] w-[105px] rounded-[2px] border border-[#c0c0c0] bg-[#f3f3f3] text-[10px] text-[#222]">Cancel</button>
          <button className="h-[24px] w-[106px] rounded-[2px] border border-[#9c0f28] bg-[#b3112e] text-[10px] font-bold text-white">Save</button>
        </div>
      </div>
    </div>
  );
}

export default function App() {
  return (
    <div className="h-screen bg-[#e3e7e3] p-px font-['Open_Sans',sans-serif]">
      <div className="relative flex h-full flex-col overflow-hidden border border-black bg-white pt-px">
        <div className="h-px shrink-0 bg-[#b5122f]" />
        <Header />
        <Toolbar />
        <div className="flex min-h-0 flex-1">
          <Rail />
          <WidgetPanel />
          <main className="flex-1 overflow-hidden bg-[#e9ebee] pt-[35px] pr-[186px] pl-[198px]">
            <div className="h-full bg-white shadow-[0_0_6px_1px_rgba(0,0,0,0.7)]" />
          </main>
        </div>
        <div className="absolute inset-0 flex items-start justify-center bg-black/40 pt-[92px] pr-[51px]">
          <Dialog />
        </div>
      </div>
    </div>
  );
}
